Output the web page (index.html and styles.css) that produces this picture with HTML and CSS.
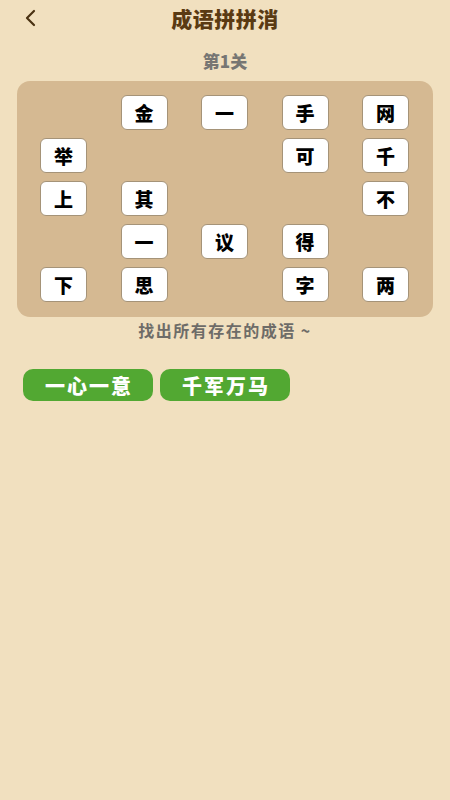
FILE: index.html
```html
<!DOCTYPE html>
<html lang="zh">
<head>
<meta charset="utf-8">
<link rel="stylesheet" href="styles.css">
</head>
<body>
<div class="app">
  <header class="topbar">
    <svg class="back" width="14" height="18" viewBox="0 0 14 18"><path d="M11 2 L4 9 L11 16" fill="none" stroke="#4a3212" stroke-width="2.2" stroke-linecap="round" stroke-linejoin="round"/></svg>
    <h1 class="title">成语拼拼消</h1>
  </header>
  <div class="level">第1关</div>
  <div class="board">
    <span class="cell"></span><span class="tile">金</span><span class="tile">一</span><span class="tile">手</span><span class="tile">网</span>
    <span class="tile">举</span><span class="cell"></span><span class="cell"></span><span class="tile">可</span><span class="tile">千</span>
    <span class="tile">上</span><span class="tile">其</span><span class="cell"></span><span class="cell"></span><span class="tile">不</span>
    <span class="cell"></span><span class="tile">一</span><span class="tile">议</span><span class="tile">得</span><span class="cell"></span>
    <span class="tile">下</span><span class="tile">思</span><span class="cell"></span><span class="tile">字</span><span class="tile">两</span>
  </div>
  <div class="hint">找出所有存在的成语 ~</div>
  <div class="found">
    <span class="idiom">一心一意</span>
    <span class="idiom">千军万马</span>
  </div>
</div>
</body>
</html>
```
FILE: styles.css
```css
* { box-sizing: border-box; }
html, body {
  margin: 0;
  padding: 0;
  background: #f1e0bf;
  font-family: "Noto Sans CJK SC", "Noto Sans", sans-serif;
}
.app {
  width: 450px;
  min-height: 800px;
  background: #f1e0bf;
}
.topbar {
  position: relative;
  height: 36px;
  display: flex;
  align-items: center;
  justify-content: center;
}
.back {
  position: absolute;
  left: 23px;
  top: 9px;
}
.title {
  margin: 0;
  font-size: 21px;
  font-weight: 900;
  color: #5a3a12;
  line-height: 36px;
  letter-spacing: 0.5px;
}
.level {
  margin-top: 12px;
  text-align: center;
  font-size: 17px;
  font-weight: 900;
  color: #777673;
  line-height: 26px;
}
.board {
  margin: 7px 17px 0;
  background: #d5b992;
  border-radius: 13px;
  padding: 14px 24px 15px 23px;
  display: grid;
  grid-template-columns: repeat(5, 47px);
  grid-auto-rows: 35px;
  column-gap: 33.5px;
  row-gap: 8px;
}
.tile {
  background: #fff;
  border: 1.5px solid #a59378;
  border-radius: 6px;
  display: flex;
  align-items: center;
  justify-content: center;
  font-size: 19px;
  font-weight: 900;
  color: #000;
}
.hint {
  margin-top: 2px;
  text-align: center;
  font-size: 16px;
  font-weight: 700;
  color: #6e6c68;
  line-height: 22px;
  letter-spacing: 1.5px;
}
.found {
  margin: 28px 0 0 23px;
  display: flex;
  gap: 7px;
}
.idiom {
  width: 130px;
  height: 32px;
  border-radius: 10px;
  background: #52a832;
  color: #fff;
  font-size: 20px;
  font-weight: 900;
  display: flex;
  align-items: center;
  justify-content: center;
  letter-spacing: 2px;
  padding-left: 2px;
}
```
